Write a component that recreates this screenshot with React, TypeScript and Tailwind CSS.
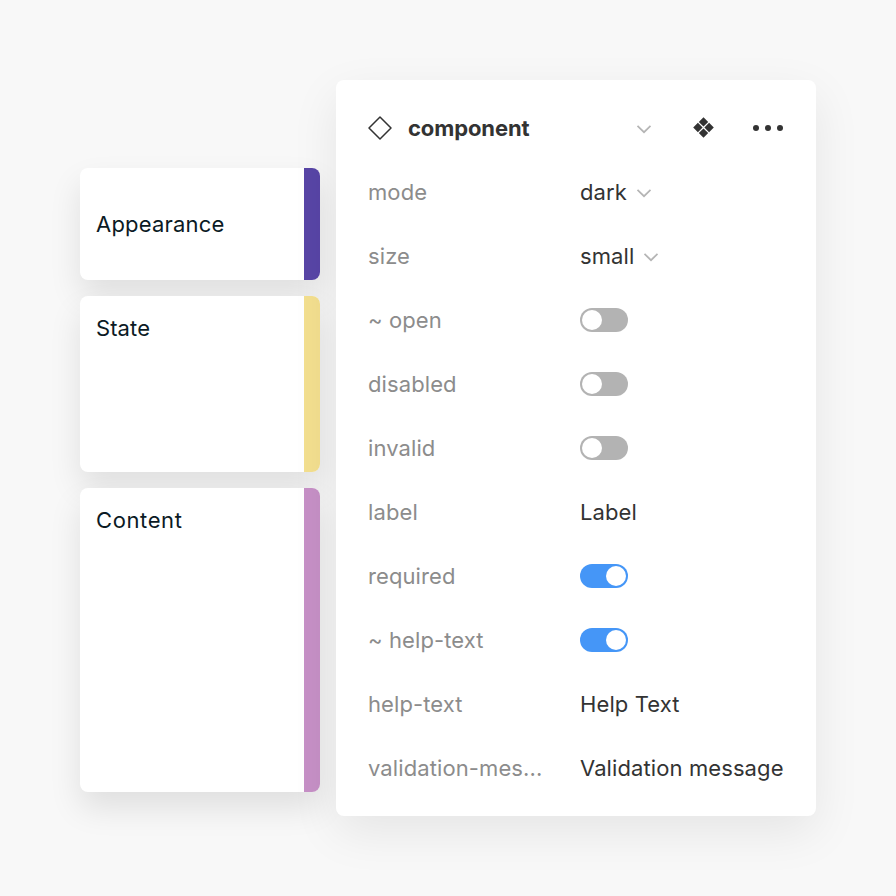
const Chevron = ({ className }: { className: string }) => (
  <svg className={className} width="16" height="16" viewBox="0 0 16 16" fill="none">
    <path d="M1.500 4.800 8 11.200l6.500-6.400" stroke="#b5b5b5" strokeWidth="1.700" />
  </svg>
);

const Toggle = ({ on }: { on?: boolean }) => (
  <div className={`flex h-6 w-12 items-center rounded-full p-0.5 ${on ? "justify-end bg-[#4596f7]" : "justify-start bg-[#b3b3b3]"}`}>
    <div className="size-5 rounded-full bg-white" />
  </div>
);

const Text = ({ children }: { children: string }) => <span className="text-[#333333]">{children}</span>;

const Select = ({ children }: { children: string }) => (
  <div className="flex items-center gap-[9px]">
    <Text>{children}</Text>
    <Chevron className="mt-0.5" />
  </div>
);

const rows: [string, React.ReactNode][] = [
  ["mode", <Select>dark</Select>],
  ["size", <Select>small</Select>],
  ["~ open", <Toggle />],
  ["disabled", <Toggle />],
  ["invalid", <Toggle />],
  ["label", <Text>Label</Text>],
  ["required", <Toggle on />],
  ["~ help-text", <Toggle on />],
  ["help-text", <Text>Help Text</Text>],
  ["validation-mes...", <Text>Validation message</Text>],
];

const Card = ({ label, color, className }: { label: string; color: string; className: string }) => (
  <div className={`flex w-60 overflow-hidden rounded-lg bg-white shadow-[0_16px_32px_rgba(0,0,0,0.1)] ${className}`}>
    <div className="flex-1 px-4 text-[22px] leading-8 text-[#0b1a24]">{label}</div>
    <div className={`w-4 ${color}`} />
  </div>
);

export default function App() {
  return (
    <div className="flex h-[896px] w-[896px] items-start gap-4 bg-[#f8f8f8] pl-20 pt-20 font-['Inter',sans-serif]">
      <div className="mt-[88px] flex flex-col gap-4">
        <Card label="Appearance" color="bg-[#5845a6]" className="h-28 tracking-[0.2px] [&>div:first-child]:py-10" />
        <Card label="State" color="bg-[#f3df8f]" className="h-44 tracking-[0.1px] [&>div:first-child]:py-4" />
        <Card label="Content" color="bg-[#c690c6]" className="h-[304px] tracking-[0.6px] [&>div:first-child]:py-4" />
      </div>
      <div className="h-[736px] w-[480px] rounded-lg bg-white px-8 py-4 text-[22px] tracking-[0.1px] shadow-[0_16px_48px_rgba(0,0,0,0.08)]">
        <div className="flex h-16 items-center">
          <svg width="24" height="24" viewBox="0 0 24 24" fill="none">
            <path d="M12 1 23 12 12 23 1 12Z" stroke="#333333" strokeWidth="1.500" strokeLinejoin="round" />
          </svg>
          <span className="ml-4 flex-1 font-bold tracking-[-0.1px] text-[#333333]">component</span>
          <Chevron className="mt-0.5" />
          <svg className="ml-10" width="24" height="24" viewBox="0 0 24 24" fill="#333333">
            <path d="M11.500 1.200l4.700 4.700-4.700 4.700-4.700-4.700zM5.900 6.800l4.700 4.700-4.700 4.700-4.700-4.700zM17.100 6.800l4.700 4.700-4.700 4.700-4.700-4.700zM11.500 12.400l4.700 4.700-4.700 4.700-4.700-4.700z" />
          </svg>
          <svg className="ml-[36px]" width="32" height="8" viewBox="0 0 32 8" fill="#333333">
            <circle cx="4" cy="4" r="3" />
            <circle cx="16" cy="4" r="3" />
            <circle cx="28" cy="4" r="3" />
          </svg>
        </div>
        {rows.map(([label, value]) => (
          <div key={label} className="flex h-16 items-center">
            <span className="w-[212px] shrink-0 text-[#8c8c8c]">{label}</span>
            {value}
          </div>
        ))}
      </div>
    </div>
  );
}
